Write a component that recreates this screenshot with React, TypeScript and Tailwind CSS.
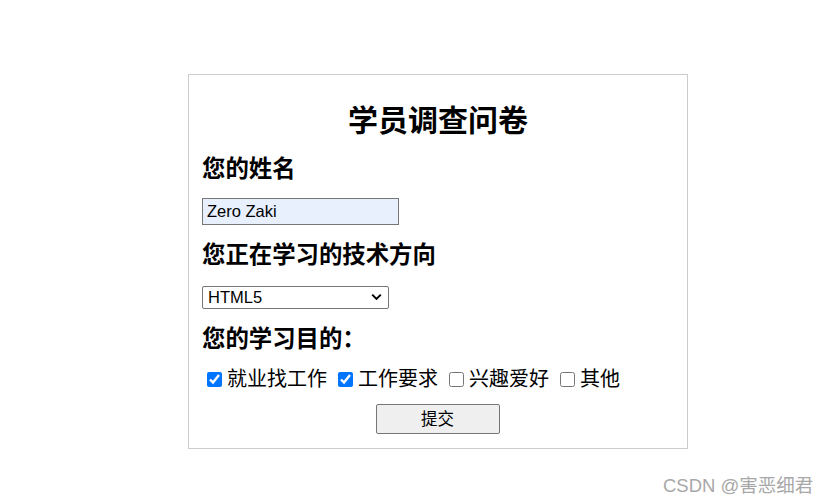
import { useState } from 'react';

const FONT = { fontFamily: '"Liberation Sans", "Noto Sans CJK SC", sans-serif' };

const PURPOSES = [
  { label: '就业找工作', checked: true },
  { label: '工作要求', checked: true },
  { label: '兴趣爱好', checked: false },
  { label: '其他', checked: false },
];

export default function App() {
  const [name, setName] = useState('Zero Zaki');
  const [track, setTrack] = useState('HTML5');
  const [picked, setPicked] = useState(PURPOSES.map((p) => p.checked));

  const toggle = (i: number) => setPicked((v) => v.map((c, j) => (j === i ? !c : c)));

  return (
    <div className="relative min-h-screen w-full bg-white text-black" style={FONT}>
      <div className="pt-[74px] pl-[188px]">
        <form
          className="flex w-[500px] flex-col border border-[#cccccc] pb-[14px] pl-[13px]"
          onSubmit={(e) => e.preventDefault()}
        >
          <h2 className="mt-[31px] text-center text-[30px] font-bold leading-[30px] pr-[13px]">学员调查问卷</h2>

          <h3 className="mt-[18px] text-[23.4px] font-bold leading-[30px]">您的姓名</h3>
          <input
            className="mt-[14px] h-[27px] w-[197px] border border-[#767676] bg-[#e8f0fe] pl-[4px] text-[16.5px] outline-none"
            value={name}
            onChange={(e) => setName(e.target.value)}
          />

          <h3 className="mt-[15px] text-[23.4px] font-bold leading-[30px]">您正在学习的技术方向</h3>
          <div className="relative mt-[16px] h-[23px] w-[187px]">
            <select
              className="h-full w-full appearance-none rounded-[2px] border border-[#767676] bg-white pl-[5px] text-[16.5px] leading-[21px] outline-none"
              value={track}
              onChange={(e) => setTrack(e.target.value)}
            >
              <option>HTML5</option>
              <option>Java</option>
              <option>Python</option>
              <option>UI设计</option>
            </select>
            <svg
              className="pointer-events-none absolute right-[7px] top-[7px]"
              width="11"
              height="8"
              viewBox="0 0 11 8"
              fill="none"
            >
              <path d="M1.2 1.6 L5.5 5.9 L9.8 1.6" stroke="#000" strokeWidth="2" />
            </svg>
          </div>

          <h3 className="mt-[15px] text-[23.4px] font-bold leading-[30px]">您的学习目的：</h3>
          <div className="mt-[12px] flex h-[26px] items-center text-[20px] leading-[26px]">
            {PURPOSES.map((p, i) => (
              <label key={p.label} className="ml-[5px] mr-[6px] flex items-center gap-[5px]">
                <input
                  type="checkbox"
                  className="m-0 h-[15px] w-[15px] accent-[#0075ff]"
                  checked={picked[i]}
                  onChange={() => toggle(i)}
                />
                <span>{p.label}</span>
              </label>
            ))}
          </div>

          <button
            type="submit"
            className="mx-auto mt-[12px] h-[30px] w-[124px] -translate-x-[7px] rounded-[2px] border border-[#767676] bg-[#efefef] text-[16.5px]"
          >
            提交
          </button>
        </form>
      </div>

      <div className="absolute left-[663px] top-[473px] text-[18.5px] leading-[26px] text-[#a8a8a8]">
        CSDN @害恶细君
      </div>
    </div>
  );
}
